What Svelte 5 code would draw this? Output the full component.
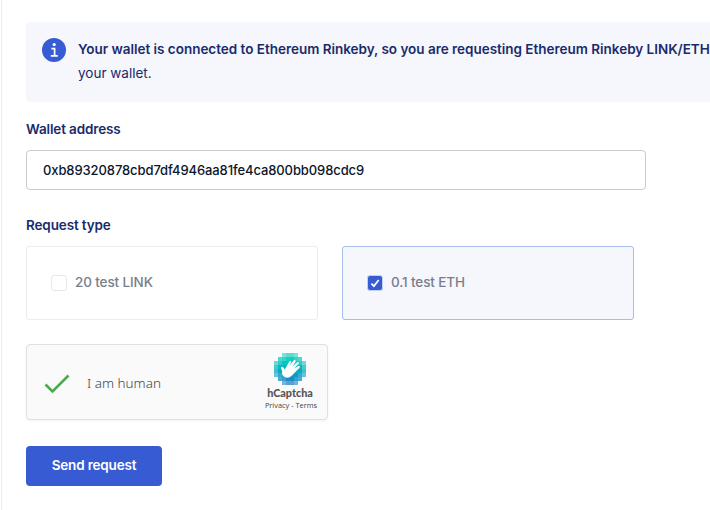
<script lang="ts">
    let address = "0xb89320878cbd7df4946aa81fe4ca800bb098cdc9";

    let options = [
        { id: "link", label: "20 test LINK", checked: false },
        { id: "eth", label: "0.1 test ETH", checked: true },
    ];

    // 8x8 tile grid behind the hand, one row of opacities per line
    const tiles = [
        [0, 0, 0.6, 0.75, 0.75, 0.6, 0, 0],
        [0, 0.75, 0.85, 1, 1, 0.85, 0.75, 0],
        [0.6, 0.85, 1, 1, 1, 1, 0.85, 0.6],
        [0.75, 1, 1, 1, 1, 1, 1, 0.75],
        [0.75, 1, 1, 1, 1, 1, 1, 0.75],
        [0.6, 0.85, 1, 1, 1, 1, 0.85, 0.6],
        [0, 0.75, 0.85, 1, 1, 0.85, 0.75, 0],
        [0, 0, 0.6, 0.75, 0.75, 0.6, 0, 0],
    ];
    const rowColors = ["#1fd6c3", "#16cdbf", "#0dc3bf", "#08b8c0", "#08abc2", "#0c9dc4", "#168fc6", "#2480c8"];
</script>

<main>
    <div class="banner">
        <svg class="info" viewBox="0 0 24 24" width="24" height="24">
            <circle cx="12" cy="12" r="12" fill="#375bd2" />
            <circle cx="12.2" cy="6.6" r="1.6" fill="#fff" />
            <path d="M9.4 10.6h3.2v6.8M8.8 17.8h7" fill="none" stroke="#fff" stroke-width="1.7" />
        </svg>
        <div class="message">
            <strong>Your wallet is connected to Ethereum Rinkeby, so you are requesting Ethereum Rinkeby LINK/ETH</strong>
            <p>your wallet.</p>
        </div>
    </div>

    <label class="heading" for="address">Wallet address</label>
    <input id="address" class="address" type="text" spellcheck="false" bind:value={address} />

    <div class="heading type">Request type</div>
    <div class="options">
        {#each options as option (option.id)}
            <label class="option" class:selected={option.checked}>
                <input type="checkbox" bind:checked={option.checked} />
                <span class="box">
                    {#if option.checked}
                        <svg viewBox="0 0 14 14" width="14" height="14">
                            <path d="M3.4 7.6l2.5 2.5 4.8-6.2" fill="none" stroke="#fff" stroke-width="1.7" />
                        </svg>
                    {/if}
                </span>
                <span class="option-label">{option.label}</span>
            </label>
        {/each}
    </div>

    <div class="captcha">
        <svg class="tick" viewBox="0 0 26 20" width="26" height="20">
            <path d="M1.5 10.5l7 7L24.5 1.5" fill="none" stroke="#4aa851" stroke-width="2.5" />
        </svg>
        <span class="human">I am human</span>
        <div class="brand">
            <svg viewBox="0 0 32 32" width="32" height="32" shape-rendering="crispEdges">
                {#each tiles as row, y}
                    {#each row as opacity, x}
                        <rect x={x * 4} y={y * 4} width="4" height="4" fill={rowColors[y]} {opacity} />
                    {/each}
                {/each}
                <path
                    shape-rendering="auto"
                    fill="#fff"
                    d="M8.3 18.6L7 15.2C6.6 13.6 8.4 13.1 9.1 14.3L10.8 16.4L15.3 8.6C16.1 7.4 17.8 8.2 17.2 9.5L15.4 13.1L19.7 7.5C20.7 6.4 22.2 7.5 21.5 8.8L18.2 13.7L23 9.2C24.1 8.3 25.4 9.5 24.6 10.7L20 15.8L24.2 13C25.4 12.3 26.4 13.6 25.5 14.7L20.2 20.2C17.4 23.7 14.4 25.4 11.2 24.3C8.2 23.2 7.5 20.9 8.3 18.6Z"
                />
            </svg>
            <span class="name">hCaptcha</span>
            <span class="links">Privacy - Terms</span>
        </div>
    </div>

    <button type="button">Send request</button>
</main>

<style>
    :global(body) {
        overflow: hidden;
        background: #fff;
    }

    main {
        box-sizing: border-box;
        width: 709px;
        height: 510px;
        padding: 22px 0 0 24px;
        margin-left: 1px;
        border-left: 1px solid #ebebf5;
        overflow: hidden;
        font-family: Inter, "Liberation Sans", sans-serif;
        font-size: 13.5px;
        color: #1a2b6b;
    }

    .banner {
        display: flex;
        box-sizing: border-box;
        width: 720px;
        height: 80px;
        padding: 15px 16px;
        background: #f5f7fd;
        border-radius: 4px;
    }

    .info {
        flex: none;
        margin: 1px 12px 0 0;
    }

    .message {
        line-height: 24px;
        white-space: nowrap;
    }

    .message strong {
        display: block;
        font-weight: 600;
        letter-spacing: -0.02px;
    }

    .message p {
        margin: 0;
    }

    .heading {
        display: block;
        margin-top: 15px;
        line-height: 24px;
        font-weight: 600;
        letter-spacing: -0.13px;
    }

    .address {
        box-sizing: border-box;
        display: block;
        width: 620px;
        height: 40px;
        margin-top: 9px;
        padding: 0 16px 1px;
        border: 1px solid #cacbd0;
        border-radius: 4px;
        outline: none;
        font: inherit;
        font-size: 13px;
        font-weight: 500;
        letter-spacing: -0.1px;
        color: #0c162c;
    }

    .type {
        margin-top: 23px;
    }

    .options {
        display: flex;
        gap: 24px;
        margin-top: 9px;
    }

    .option {
        display: flex;
        align-items: center;
        box-sizing: border-box;
        width: 292px;
        height: 74px;
        padding-left: 24px;
        border: 1px solid #ececee;
        border-radius: 3px;
    }

    .option.selected {
        border-color: #a6bcea;
        background: #f5f7fd;
    }

    .option input {
        display: none;
    }

    .box {
        display: flex;
        align-items: center;
        justify-content: center;
        box-sizing: border-box;
        width: 16px;
        height: 16px;
        border: 1px solid #e8e8eb;
        border-radius: 3px;
        background: #fff;
    }

    .selected .box {
        border-color: #c3d0f3;
        background: #375bd2;
    }

    .option-label {
        margin-left: 8px;
        padding-bottom: 2px;
        font-weight: 500;
        letter-spacing: -0.12px;
        color: #797e8c;
    }

    .captcha {
        display: flex;
        align-items: center;
        box-sizing: border-box;
        width: 302px;
        height: 76px;
        margin-top: 24px;
        padding-left: 17px;
        border: 1px solid #e0e0e0;
        border-radius: 4px;
        background: #fafafa;
        box-shadow: 0 1px 3px rgba(0, 0, 0, 0.05);
    }

    .tick {
        margin-top: 4px;
    }

    .human {
        margin-left: 17px;
        padding-top: 1px;
        font-family: "Noto Sans", sans-serif;
        font-size: 13.5px;
        font-weight: 300;
        color: #444;
    }

    .brand {
        display: flex;
        flex-direction: column;
        align-items: center;
        width: 74px;
        margin-left: auto;
    }

    .name {
        font-family: Lato, sans-serif;
        font-size: 10.8px;
        font-weight: 900;
        line-height: 15px;
        color: #555;
    }

    .links {
        padding-left: 2px;
        font-family: "Open Sans", sans-serif;
        font-size: 7.4px;
        line-height: 11px;
        color: #444;
    }

    button {
        display: block;
        width: 136px;
        height: 40px;
        margin-top: 26px;
        padding: 0 0 2px;
        border: 0;
        border-radius: 4px;
        background: #375bd2;
        font: inherit;
        font-weight: 600;
        letter-spacing: -0.17px;
        color: #fff;
    }
</style>
